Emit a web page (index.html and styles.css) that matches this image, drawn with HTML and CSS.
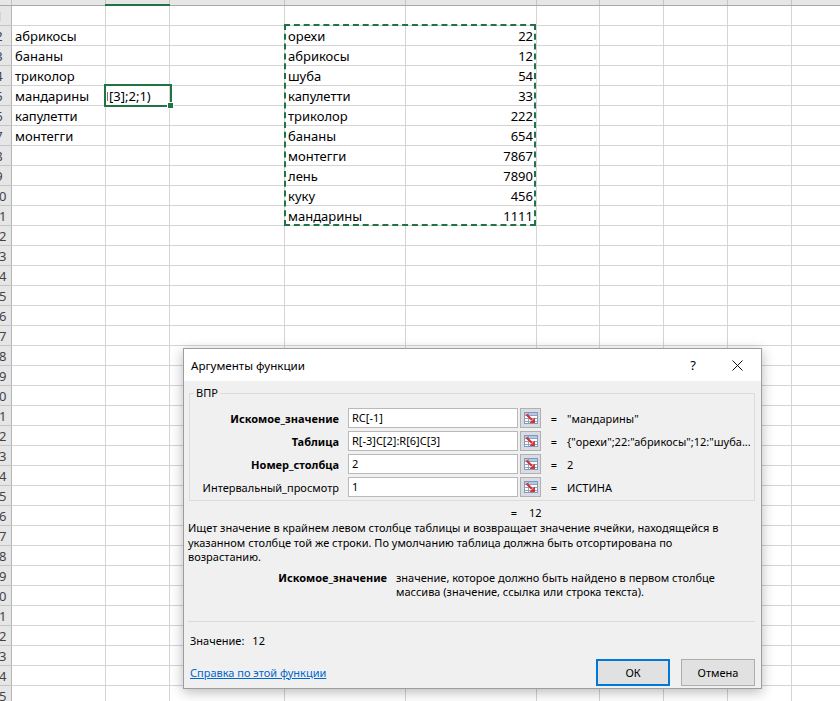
FILE: index.html
```html
<!DOCTYPE html>
<html lang="ru">
<head>
<meta charset="utf-8">
<title>Аргументы функции</title>
<link rel="stylesheet" href="styles.css">
</head>
<body>
<div class="sheet">
  <div class="colhdr"><div class="hsel"></div></div>
  <div class="row"><div class="rh"><span>1</span></div></div>
  <div class="row"><div class="rh"><span>2</span></div><div class="c a">абрикосы</div><div class="c d">орехи</div><div class="c e">22</div></div>
  <div class="row"><div class="rh"><span>3</span></div><div class="c a">бананы</div><div class="c d">абрикосы</div><div class="c e">12</div></div>
  <div class="row"><div class="rh"><span>4</span></div><div class="c a">триколор</div><div class="c d">шуба</div><div class="c e">54</div></div>
  <div class="row"><div class="rh"><span>5</span></div><div class="c a">мандарины</div><div class="c b active"><span class="formula">[3];2;1)</span></div><div class="c d">капулетти</div><div class="c e">33</div></div>
  <div class="row"><div class="rh"><span>6</span></div><div class="c a">капулетти</div><div class="c d">триколор</div><div class="c e">222</div></div>
  <div class="row"><div class="rh"><span>7</span></div><div class="c a">монтегги</div><div class="c d">бананы</div><div class="c e">654</div></div>
  <div class="row"><div class="rh"><span>8</span></div><div class="c d">монтегги</div><div class="c e">7867</div></div>
  <div class="row"><div class="rh"><span>9</span></div><div class="c d">лень</div><div class="c e">7890</div></div>
  <div class="row"><div class="rh"><span>10</span></div><div class="c d">куку</div><div class="c e">456</div></div>
  <div class="row"><div class="rh"><span>11</span></div><div class="c d">мандарины</div><div class="c e">1111</div></div>
  <div class="row"><div class="rh"><span>12</span></div></div>
  <div class="row"><div class="rh"><span>13</span></div></div>
  <div class="row"><div class="rh"><span>14</span></div></div>
  <div class="row"><div class="rh"><span>15</span></div></div>
  <div class="row"><div class="rh"><span>16</span></div></div>
  <div class="row"><div class="rh"><span>17</span></div></div>
  <div class="row"><div class="rh"><span>18</span></div></div>
  <div class="row"><div class="rh"><span>19</span></div></div>
  <div class="row"><div class="rh"><span>20</span></div></div>
  <div class="row"><div class="rh"><span>21</span></div></div>
  <div class="row"><div class="rh"><span>22</span></div></div>
  <div class="row"><div class="rh"><span>23</span></div></div>
  <div class="row"><div class="rh"><span>24</span></div></div>
  <div class="row"><div class="rh"><span>25</span></div></div>
  <div class="row"><div class="rh"><span>26</span></div></div>
  <div class="row"><div class="rh"><span>27</span></div></div>
  <div class="row"><div class="rh"><span>28</span></div></div>
  <div class="row"><div class="rh"><span>29</span></div></div>
  <div class="row"><div class="rh"><span>30</span></div></div>
  <div class="row"><div class="rh"><span>31</span></div></div>
  <div class="row"><div class="rh"><span>32</span></div></div>
  <div class="row"><div class="rh"><span>33</span></div></div>
  <div class="row"><div class="rh"><span>34</span></div></div>
  <div class="row"><div class="rh"><span>35</span></div></div>

  <div class="marquee"></div>

  <div class="dialog">
    <div class="titlebar">
      <span class="title">Аргументы функции</span>
      <span class="help">?</span>
      <span class="close"><svg width="11" height="11" viewBox="0 0 11 11"><path d="M0.5 0.5L10.5 10.5M10.5 0.5L0.5 10.5" stroke="#111" stroke-width="1" fill="none"/></svg></span>
    </div>
    <div class="dbody">
      <div class="group">
        <div class="legend">ВПР</div>
        <div class="args">
          <div class="lbl strong">Искомое_значение</div>
          <div class="inp">RC[-1]</div>
          <div class="refbtn"><svg width="16" height="14" viewBox="0 0 16 14"><rect x="1.5" y="1.5" width="13" height="11" fill="#fff" stroke="#7f98c0"/><rect x="2" y="2" width="12" height="2" fill="#b8c8e0"/><path d="M1.5 4.5h13M1.5 7.5h13M1.5 10.5h13M5.5 1.5v11" stroke="#8ea3c2" fill="none"/><path d="M3.5 3.5l5.5 5.5" stroke="#d8332a" stroke-width="2.2"/><path d="M12 12H6.5L12 6.5z" fill="#d8332a"/></svg></div>
          <div class="eq">=</div>
          <div class="val">"мандарины"</div>

          <div class="lbl strong">Таблица</div>
          <div class="inp">R[-3]C[2]:R[6]C[3]</div>
          <div class="refbtn"><svg width="16" height="14" viewBox="0 0 16 14"><rect x="1.5" y="1.5" width="13" height="11" fill="#fff" stroke="#7f98c0"/><rect x="2" y="2" width="12" height="2" fill="#b8c8e0"/><path d="M1.5 4.5h13M1.5 7.5h13M1.5 10.5h13M5.5 1.5v11" stroke="#8ea3c2" fill="none"/><path d="M3.5 3.5l5.5 5.5" stroke="#d8332a" stroke-width="2.2"/><path d="M12 12H6.5L12 6.5z" fill="#d8332a"/></svg></div>
          <div class="eq">=</div>
          <div class="val">{"орехи";22:"абрикосы";12:"шуба...</div>

          <div class="lbl strong">Номер_столбца</div>
          <div class="inp">2</div>
          <div class="refbtn"><svg width="16" height="14" viewBox="0 0 16 14"><rect x="1.5" y="1.5" width="13" height="11" fill="#fff" stroke="#7f98c0"/><rect x="2" y="2" width="12" height="2" fill="#b8c8e0"/><path d="M1.5 4.5h13M1.5 7.5h13M1.5 10.5h13M5.5 1.5v11" stroke="#8ea3c2" fill="none"/><path d="M3.5 3.5l5.5 5.5" stroke="#d8332a" stroke-width="2.2"/><path d="M12 12H6.5L12 6.5z" fill="#d8332a"/></svg></div>
          <div class="eq">=</div>
          <div class="val">2</div>

          <div class="lbl">Интервальный_просмотр</div>
          <div class="inp">1</div>
          <div class="refbtn"><svg width="16" height="14" viewBox="0 0 16 14"><rect x="1.5" y="1.5" width="13" height="11" fill="#fff" stroke="#7f98c0"/><rect x="2" y="2" width="12" height="2" fill="#b8c8e0"/><path d="M1.5 4.5h13M1.5 7.5h13M1.5 10.5h13M5.5 1.5v11" stroke="#8ea3c2" fill="none"/><path d="M3.5 3.5l5.5 5.5" stroke="#d8332a" stroke-width="2.2"/><path d="M12 12H6.5L12 6.5z" fill="#d8332a"/></svg></div>
          <div class="eq">=</div>
          <div class="val">ИСТИНА</div>
        </div>
      </div>

      <div class="result"><span class="req">=</span><span>12</span></div>
      <p class="desc">Ищет значение в крайнем левом столбце таблицы и возвращает значение ячейки, находящейся в<br>указанном столбце той же строки. По умолчанию таблица должна быть отсортирована по<br>возрастанию.</p>

      <div class="arghelp">
        <div class="ahname">Искомое_значение</div>
        <div class="ahtext">значение, которое должно быть найдено в первом столбце<br>массива (значение, ссылка или строка текста).</div>
      </div>

      <div class="sep"></div>

      <div class="value">Значение:<span class="vnum">12</span></div>

      <div class="footer">
        <a class="link" href="#">Справка по этой функции</a>
        <div class="btns">
          <button class="btn ok">ОК</button>
          <button class="btn">Отмена</button>
        </div>
      </div>
    </div>
  </div>
</div>
</body>
</html>
```

FILE: styles.css
```css
* { box-sizing: border-box; }

html, body {
  margin: 0;
  padding: 0;
  width: 840px;
  height: 701px;
  overflow: hidden;
  background: #fff;
}

body {
  font-family: "Noto Sans", "Open Sans", sans-serif;
  color: #000;
}

.sheet {
  position: relative;
  width: 840px;
  height: 701px;
  overflow: hidden;
  background-color: #fff;
  background-image:
    linear-gradient(#d4d4d4, #d4d4d4), linear-gradient(#d4d4d4, #d4d4d4),
    linear-gradient(#d4d4d4, #d4d4d4), linear-gradient(#d4d4d4, #d4d4d4),
    linear-gradient(#d4d4d4, #d4d4d4), linear-gradient(#d4d4d4, #d4d4d4),
    linear-gradient(#d4d4d4, #d4d4d4), linear-gradient(#d4d4d4, #d4d4d4),
    linear-gradient(#d4d4d4, #d4d4d4);
  background-size: 1px 100%;
  background-repeat: no-repeat;
  background-position: 105px 0, 169px 0, 284px 0, 405px 0, 536px 0, 599px 0, 663px 0, 727px 0, 791px 0;
}

/* column header strip */
.colhdr {
  height: 6px;
  display: grid;
  grid-template-columns: 12px 94px 64px 1fr;
  background-color: #e6e6e6;
  border-bottom: 1px solid #a9a9a9;
  background-image:
    linear-gradient(#c4c4c4, #c4c4c4), linear-gradient(#c4c4c4, #c4c4c4),
    linear-gradient(#c4c4c4, #c4c4c4), linear-gradient(#c4c4c4, #c4c4c4),
    linear-gradient(#c4c4c4, #c4c4c4), linear-gradient(#c4c4c4, #c4c4c4),
    linear-gradient(#c4c4c4, #c4c4c4), linear-gradient(#c4c4c4, #c4c4c4),
    linear-gradient(#c4c4c4, #c4c4c4), linear-gradient(#c4c4c4, #c4c4c4);
  background-size: 1px 100%;
  background-repeat: no-repeat;
  background-position: 11px 0, 105px 0, 169px 0, 284px 0, 405px 0, 536px 0, 599px 0, 663px 0, 727px 0, 791px 0;
}

.hsel {
  grid-column: 3;
  align-self: end;
  height: 2px;
  margin-left: -1px;
  background: #217346;
  position: relative;
  top: 1px;
}

/* rows */
.row {
  height: 20px;
  display: grid;
  grid-template-columns: 12px 94px 64px 115px 121px 131px 1fr;
  grid-template-rows: 19px;
  border-bottom: 1px solid #d4d4d4;
  font-size: 13px;
  line-height: 19px;
}

.rh {
  grid-column: 1;
  background: #e6e6e6;
  border-right: 1px solid #b4b4b4;
  overflow: hidden;
  color: #444;
  box-shadow: 0 1px 0 #c4c4c4;
  position: relative;
  z-index: 1;
}

.rh span {
  display: block;
  width: 26px;
  margin-left: -14px;
  text-align: center;
  white-space: nowrap;
  padding-top: 1px;
}

.c {
  padding: 1px 3px 0;
  white-space: nowrap;
}

.a { grid-column: 2; }
.b { grid-column: 3; }
.d { grid-column: 5; }
.e { grid-column: 6; text-align: right; padding-right: 4px; }

/* active cell */
.active {
  position: relative;
  padding-left: 3px;
}

.formula {
  white-space: nowrap;
  position: relative;
}

.formula::before {
  content: "";
  position: absolute;
  left: -2px;
  top: 5px;
  width: 1px;
  height: 9px;
  background: #777;
}

.active::after {
  content: "";
  position: absolute;
  left: -2px;
  top: -2px;
  right: -2px;
  bottom: -2px;
  border: 2px solid #217346;
}

.active::before {
  content: "";
  position: absolute;
  right: -4px;
  bottom: -4px;
  width: 5px;
  height: 5px;
  background: #217346;
  border: 1px solid #fff;
  z-index: 2;
}

/* copy marquee */
.marquee {
  position: absolute;
  left: 284px;
  top: 24px;
  width: 252px;
  height: 202px;
  border: 2px dashed #217346;
  pointer-events: none;
}

/* dialog */
.dialog {
  position: absolute;
  left: 183px;
  top: 348px;
  width: 579px;
  height: 341px;
  background: #f0f0f0;
  border: 1px solid #9d9d9d;
  box-shadow: 0 3px 12px rgba(0, 0, 0, 0.28);
  font-size: 11px;
  line-height: 15px;
  color: #000;
}

.titlebar {
  height: 32px;
  background: #fff;
  display: flex;
  align-items: center;
  padding-left: 7px;
  font-size: 11.6px;
}

.title {
  flex: 1;
  color: #000;
}

.help {
  width: 20px;
  text-align: center;
  margin-right: 29px;
  font-size: 13px;
}

.close {
  width: 11px;
  height: 11px;
  margin-right: 18px;
  display: flex;
}

.dbody {
  padding: 0 6px 0 5px;
}

.group {
  margin-top: 12px;
  border: 1px solid #dcdcdc;
  padding: 0 0 3px 0;
}

.legend {
  display: table;
  margin: -9px 0 0 4px;
  padding: 0 2px;
  background: #f0f0f0;
  line-height: 16px;
}

.args {
  margin-top: 7px;
  display: grid;
  grid-template-columns: 158px 170px 23px 25px 1fr;
  grid-auto-rows: 20px;
  row-gap: 3px;
  align-items: center;
}

.lbl {
  text-align: right;
  padding-right: 9px;
  white-space: nowrap;
}

.strong { font-weight: bold; }

.inp {
  height: 20px;
  background: #fff;
  border: 1px solid #b9b9b9;
  padding: 1px 0 0 3px;
  line-height: 16px;
  white-space: nowrap;
  overflow: hidden;
}

.refbtn {
  justify-self: end;
  width: 21px;
  height: 20px;
  border: 1px solid #b0b0b0;
  background: #d9dde3;
  display: flex;
  align-items: center;
  justify-content: center;
}

.eq {
  text-align: center;
  padding-left: 1px;
}

.val {
  white-space: nowrap;
  overflow: hidden;
  padding-left: 1px;
}

.result {
  margin-top: 5px;
  padding-left: 317px;
  display: flex;
  line-height: 14px;
}

.req {
  width: 16px;
  text-align: center;
  margin-right: 7px;
}

.desc {
  margin: 1px 0 0 -1px;
  line-height: 14.5px;
  white-space: nowrap;
}

.arghelp {
  margin-top: 6px;
  display: grid;
  grid-template-columns: 199px 1fr;
  column-gap: 9px;
  line-height: 14px;
  margin-left: -1px;
}

.ahname {
  text-align: right;
  font-weight: bold;
  white-space: nowrap;
}

.ahtext {
  white-space: nowrap;
}

.sep {
  margin: 22px 0 0 -1px;
  height: 1px;
  background: #dadada;
}

.value {
  margin-top: 11px;
  padding-left: 1px;
  line-height: 15px;
}

.vnum {
  margin-left: 8px;
}

.footer {
  margin-top: 11px;
  display: flex;
  align-items: center;
  justify-content: space-between;
  padding-left: 1px;
}

.link {
  color: #0066cc;
  text-decoration: underline;
}

.btns {
  display: flex;
  gap: 11px;
}

.btn {
  width: 74px;
  height: 27px;
  font-family: "Noto Sans", "Open Sans", sans-serif;
  font-size: 11px;
  color: #000;
  background: #e1e1e1;
  border: 1px solid #adadad;
  padding: 0;
}

.btn.ok {
  border: 2px solid #0078d7;
}
```
